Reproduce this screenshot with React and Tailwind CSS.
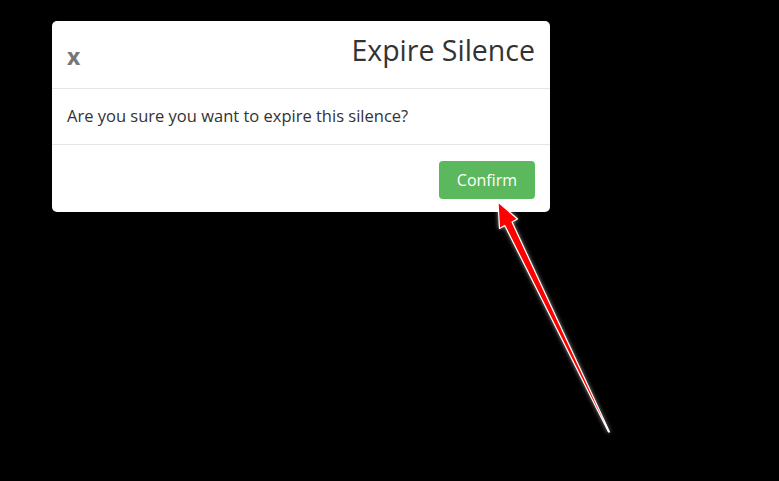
export default function App() {
  return (
    <div className="relative h-[481px] w-[779px] overflow-hidden bg-black pl-[52px] pt-[21px]" style={{ fontFamily: '"Open Sans", "Noto Sans", sans-serif' }}>
      <div className="w-[498px] rounded-[5px] bg-white">
        <div className="flex h-[68px] items-center justify-between border-b border-[#e5e5e5] px-[15px]">
          <span className="mt-[3px] text-[23px] font-bold leading-none text-[#777]">x</span>
          <h2 className="-mt-[9px] text-[28.5px] leading-none text-[#333]">Expire Silence</h2>
        </div>
        <div className="flex h-[55px] items-center px-[15px] text-[16.5px] text-[#333]">
          Are you sure you want to expire this silence?
        </div>
        <div className="flex h-[68px] items-center justify-end border-t border-[#e5e5e5] px-[15px]">
          <button className="mt-[2px] h-[38px] w-[96px] rounded-[4px] bg-[#5cb85c] text-[16px] text-white">Confirm</button>
        </div>
      </div>
      <svg className="pointer-events-none absolute left-0 top-0" width="779" height="481">
        <defs>
          <filter id="sh" x="-50%" y="-50%" width="200%" height="200%">
            <feDropShadow dx="0" dy="0" stdDeviation="2" floodColor="#fff" floodOpacity="0.6" />
          </filter>
        </defs>
        <polygon
          points="498,202 517.5,219 512,222 609.5,432 608.5,432 504.8,225.5 499.5,228.5"
          fill="#ff0000"
          stroke="#ffffff"
          strokeWidth="1.2"
          strokeLinejoin="round"
          filter="url(#sh)"
        />
      </svg>
    </div>
  );
}
